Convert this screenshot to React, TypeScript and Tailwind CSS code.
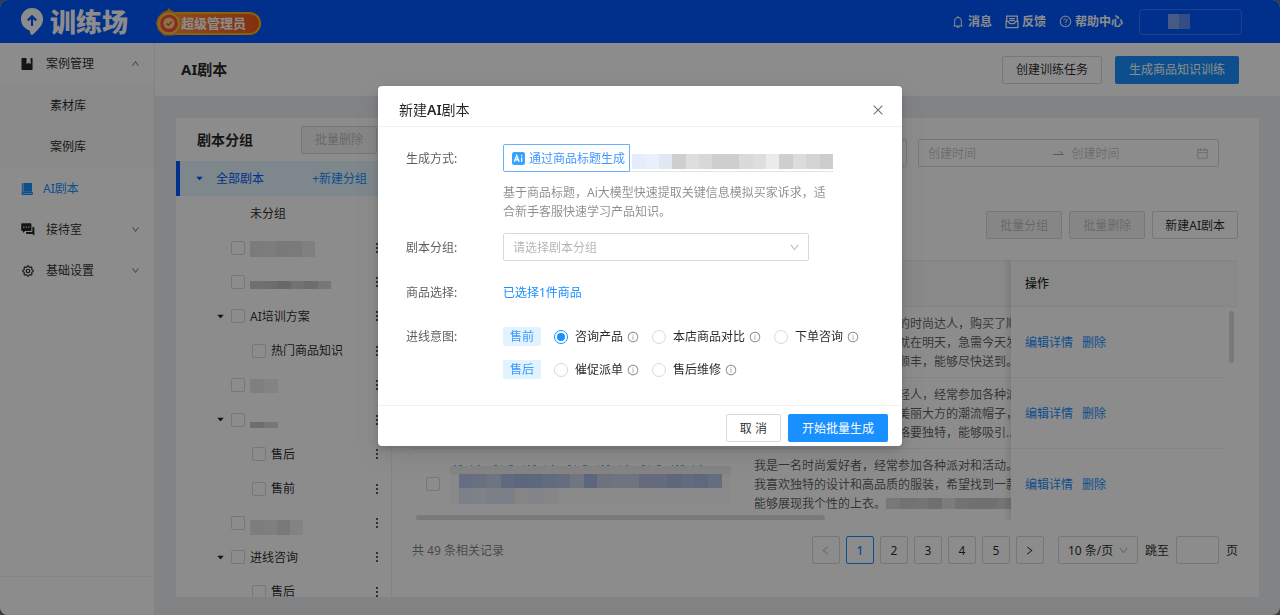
import React, { useState } from 'react';
import {
  AiFillCaretDown,
  AiOutlineBell,
  AiOutlineCalendar,
  AiOutlineClose,
  AiOutlineDown,
  AiOutlineInfoCircle,
  AiOutlineLeft,
  AiOutlineQuestionCircle,
  AiOutlineRight,
  AiOutlineUp
} from 'react-icons/ai';
import { TbSettings } from 'react-icons/tb';

interface TreeNode {
  id: string;
  label?: string;
  level: 0 | 1;
  open?: boolean;
  plain?: boolean;
  mask?: string;
  tiles?: string[];
}

const TREE: TreeNode[] = [
  { id: 'n0', label: '未分组', level: 0, plain: true },
  { id: 'n1', level: 0, mask: 'h-4 w-[65px] mt-[2px]', tiles: ['bg-[#e0e0e0]', 'bg-[#e4e4e4]', 'bg-[#dcdcdc]', 'bg-[#dedede]', 'bg-[#eaeaea]'] },
  { id: 'n2', level: 0, mask: 'h-2 w-[81px] mt-[6px]', tiles: ['bg-[#cdcdcd]', 'bg-[#c8c8c8]', 'bg-[#c0c0c0]', 'bg-[#cdd0d4]', 'bg-[#c9c6c0]', 'bg-[#d6dade]'] },
  { id: 'n3', label: 'AI培训方案', level: 0, open: true },
  { id: 'n4', label: '热门商品知识', level: 1 },
  { id: 'n5', level: 0, mask: 'h-[14px] w-7 mt-[2px]', tiles: ['bg-[#e8e8e8]', 'bg-[#eeeeee]'] },
  { id: 'n6', level: 0, open: true, mask: 'h-[6px] w-7 mt-[10px]', tiles: ['bg-[#c8c8c4]', 'bg-[#d6dad8]'] },
  { id: 'n7', label: '售后', level: 1 },
  { id: 'n8', label: '售前', level: 1 },
  { id: 'n9', level: 0, mask: 'h-[15px] w-[53px] mt-[10px]', tiles: ['bg-[#e4e4e4]', 'bg-[#e8e8e8]', 'bg-[#dcdcdc]', 'bg-[#eeeeee]'] },
  { id: 'n10', label: '进线咨询', level: 0, open: true },
  { id: 'n11', label: '售后', level: 1 }
];

const SCRIPTS = [
  {
    id: 's1',
    lines: [
      '我是一名二十五岁热爱潮流的时尚达人，购买了顺',
      '想穿去参加朋友聚会，聚会就在明天，急需今天发',
      '货，想问问是否可以选择发顺丰，能够尽快送到。'
    ]
  },
  {
    id: 's2',
    lines: [
      '我是一名喜欢潮流文化的年轻人，经常参加各种派',
      '对，想购买一顶既时尚又很美丽大方的潮流帽子，',
      '希望帽子质量非常好，且风格要独特，能够吸引...'
    ]
  },
  {
    id: 's3',
    lines: [
      '我是一名时尚爱好者，经常参加各种派对和活动。',
      '我喜欢独特的设计和高品质的服装，希望找到一款',
      '能够展现我个性的上衣。'
    ]
  }
];

const PRODUCT_TILES = [
  'bg-[#b9c8ee]', 'bg-[#c0ccea]', 'bg-[#c9d3ea]', 'bg-[#b0c0e6]', 'bg-[#a9bbe4]', 'bg-[#aabde8]', 'bg-[#b2c5e8]',
  'bg-[#b8c9e8]', 'bg-[#cdd6ea]', 'bg-[#a8bae6]', 'bg-[#c8d0e6]', 'bg-[#ccd4ea]', 'bg-[#ccd4ea]', 'bg-[#b8c4e4]',
  'bg-[#b6c4e6]', 'bg-[#aebce4]', 'bg-[#b4c2e4]', 'bg-[#aebee8]', 'bg-[#b8c6ea]'
];

const METHOD_TILES = [
  'bg-[#e4ecfd]', 'bg-[#e8f0fc]', 'bg-[#dfe7f0]', 'bg-[#cfcfcf]', 'bg-[#dedede]', 'bg-[#d8d8d8]', 'bg-[#cecece]',
  'bg-[#cecece]', 'bg-[#dadada]', 'bg-[#dedede]', 'bg-[#ebebeb]', 'bg-[#cecece]', 'bg-[#dcdcdc]', 'bg-[#d4d4d4]', 'bg-[#cdcdcd]'
];

const INTENTS = [
  { tag: '售前', options: ['咨询产品', '本店商品对比', '下单咨询'] },
  { tag: '售后', options: ['催促派单', '售后维修'] }
];

const BookmarkIcon = () => (
  <svg viewBox="0 0 12 12" className="size-3" fill="currentColor">
    <path d="M1.4 0H5.5V6.2L7.6 4.7L9.6 6.2V0H10.8Q11.6 0 11.6 .8V11.2Q11.6 12 10.8 12H1.4Q.5 12 .5 11.2V.8Q.5 0 1.4 0Z" />
  </svg>
);

const BookIcon = () => (
  <svg viewBox="0 0 12 12" className="size-3" fill="currentColor">
    <path d="M1.800 0H11V8.800H2.400V0ZM.8 1Q.8 0 1.800 0V9.200Q1.200 9.400 .8 9.900Z" />
    <path d="M2.200 9H11.800V12H2.200Q.5 12 .5 10.500T2.200 9Z" />
    <path d="M2 10.500H11" stroke="#fff" strokeWidth=".7" opacity=".7" />
  </svg>
);

const ChatIcon = () => (
  <svg viewBox="0 0 14 13" className="h-[13px] w-[14px]" fill="currentColor">
    <path d="M1.200 .2H9.400Q10.400 .2 10.400 1.200V7Q10.400 8 9.400 8H4L2 10V8H1.200Q.2 8 .2 7V1.200Q.2 .2 1.200 .2Z" />
    <path d="M11.400 4H12.400Q13.400 4 13.400 5V12.800L11.400 11H6Q5 11 5 10V9H10.400Q11.400 9 11.400 8Z" />
    <g fill="#fff">
      <rect x="2.2" y="3.5" width="1.2" height="1.2" />
      <rect x="4.7" y="3.5" width="1.2" height="1.2" />
      <rect x="7.2" y="3.5" width="1.2" height="1.2" />
    </g>
  </svg>
);

const FeedbackIcon = () => (
  <svg viewBox="0 0 14 14" className="size-[14px]" fill="none" stroke="currentColor" strokeWidth="1.300">
    <path d="M1.700 6V1.200H12.300V6" />
    <path d="M4.200 3.600H9.800M4.200 5.700H9.800" />
    <path d="M1.100 6.300V12.700H12.900V6.300H11L9 8.600H5L3 6.300Z" />
  </svg>
);

const RangeArrow = () => (
  <svg viewBox="0 0 11 8" className="h-2 w-[11px]" fill="none" stroke="currentColor">
    <path d="M0 5.500H10.300L6.800 2" />
  </svg>
);

const PinLogo = () => (
  <svg viewBox="0 0 22 27" className="h-[27px] w-[22px]">
    <path d="M11 0A11 11 0 0 1 22 11C22 16.500 19.500 18.500 16.500 22L12 26.400Q10.600 27.400 9.600 26.200L8.600 22.400C3.400 20.800 0 16.800 0 11A11 11 0 0 1 11 0Z" fill="#fff" />
    <path d="M11 18V8.600M6.800 12.400L11 8.200L15.200 12.400" fill="none" stroke="#0057ff" strokeWidth="2.200" />
  </svg>
);

const Medal = () => (
  <svg viewBox="0 0 26 28" className="absolute -left-2 -top-[6px] h-7 w-[26px]">
    <path d="M7 4L11 2.500L13 0L15 2.500L19 4L24 9L26 15L24 22L18 27.500H8L2 22L0 15L2 9Z" fill="#f09a1c" />
    <circle cx="13" cy="15.500" r="11" fill="#ffbe48" />
    <circle cx="13" cy="15.500" r="8.800" fill="#f4503c" />
    <circle cx="13" cy="15.200" r="5.600" fill="#ffd080" />
    <path d="M10.400 15.200L12.400 17.200L15.900 13.400" fill="none" stroke="#e0502a" strokeWidth="1.300" />
  </svg>
);

const Dots = () => (
  <svg viewBox="0 0 2 10" className="h-[10px] w-[2px]" fill="#5a5a5a">
    <rect width="2" height="2" />
    <rect y="4" width="2" height="2" />
    <rect y="8" width="2" height="2" />
  </svg>
);

const Mosaic: React.FC<{ tiles: string[]; className: string }> = ({ tiles, className }) => (
  <span className={`flex ${className}`}>
    {tiles.map((tile, i) => (
      <span key={i} className={`flex-1 ${tile}`} />
    ))}
  </span>
);

const checkboxClass = 'size-[14px] shrink-0 appearance-none rounded-xs border border-[#d9d9d9] bg-white checked:bg-[#1890ff]';
const buttonClass = 'h-7 rounded-xs border border-[#d9d9d9] bg-white px-3 text-black/85';
const disabledClass = 'h-7 rounded-xs border border-[#d9d9d9] bg-[#f5f5f5] px-[13px] text-black/25';
const pageClass = 'flex size-7 items-center justify-center rounded-xs border border-[#d9d9d9] bg-white';

const TopBar = () => (
  <header className="flex h-[43px] shrink-0 items-center bg-[#0057ff] pl-[21px] pr-[38px] text-white">
    <PinLogo />
    <span className="ml-[7px] text-[26px] leading-8 font-black">训练场</span>
    <div className="relative ml-[34px] mt-[3px] flex h-[23px] items-center rounded-full border-2 border-[#ffb400] bg-linear-to-r from-[#ff9040] to-[#f0561c] pl-[17px] pr-[13px] text-[13px] font-bold">
      <Medal />
      超级管理员
    </div>
    <nav className="ml-auto flex items-center gap-[13px] font-bold">
      <a href="#messages" className="flex items-center gap-[3px]"><AiOutlineBell size={14} />消息</a>
      <a href="#feedback" className="flex items-center gap-[3px]"><FeedbackIcon />反馈</a>
      <a href="#help" className="flex items-center gap-[3px]"><AiOutlineQuestionCircle size={13} />帮助中心</a>
    </nav>
    <button aria-label="账号" className="ml-4 flex h-[26px] w-[103px] items-center rounded-sm border border-white/20 pl-7">
      <Mosaic className="h-[15px] w-[22px]" tiles={['bg-[#7fa6f5]', 'bg-[#5f8cf0]']} />
    </button>
  </header>
);

const SideMenu = () => (
  <aside className="flex w-[154px] shrink-0 flex-col bg-white text-black/85">
    <nav className="flex-1">
      <a href="#cases" className="flex h-[41px] items-center pl-[21px] pr-[14px]">
        <BookmarkIcon />
        <span className="ml-[13px] flex-1">案例管理</span>
        <AiOutlineUp size={9} className="text-black/60" />
      </a>
      <div className="bg-[#fafafa] py-px">
        <a href="#material" className="flex h-[41px] items-center pl-[50px]">素材库</a>
        <a href="#case-library" className="flex h-[41px] items-center pl-[50px]">案例库</a>
      </div>
      <a href="#scripts" className="flex h-[41px] items-center pl-[21px] text-[#1890ff]">
        <BookIcon />
        <span className="ml-[10px]">AI剧本</span>
      </a>
      <a href="#reception" className="flex h-[41px] items-center pl-[21px] pr-[14px]">
        <ChatIcon />
        <span className="ml-[11px] flex-1">接待室</span>
        <AiOutlineDown size={9} className="text-black/60" />
      </a>
      <a href="#settings" className="flex h-[41px] items-center pl-[21px] pr-[14px]">
        <TbSettings size={14} />
        <span className="ml-[11px] flex-1">基础设置</span>
        <AiOutlineDown size={9} className="text-black/60" />
      </a>
    </nav>
    <div className="h-[39px] border-t border-[#f0f0f0]" />
  </aside>
);

const GroupTree = () => (
  <section className="flex w-[216px] shrink-0 flex-col overflow-hidden border-r border-[#f0f0f0]">
    <div className="flex h-[43px] shrink-0 items-center justify-between pl-[21px] pr-[14px]">
      <h2 className="text-[14px] font-bold text-black/85">剧本分组</h2>
      <button disabled className={disabledClass}>批量删除</button>
    </div>
    <div className="flex h-[35px] shrink-0 items-center border-l-4 border-[#0057ff] bg-[#e6f7ff] pl-[15px] pr-6">
      <AiFillCaretDown size={9} className="text-[#0057ff]" />
      <span className="ml-3 flex-1 text-[#0057ff]">全部剧本</span>
      <button className="text-[#1890ff]">+新建分组</button>
    </div>
    <ul className="grid h-[413px] shrink-0 auto-rows-fr">
      {TREE.map((node) => (
        <li key={node.id} className={`flex items-center pr-[13px] ${node.level === 1 ? 'pl-[61px]' : 'pl-10'}`}>
          <span className="w-[15px] shrink-0">{node.open && <AiFillCaretDown size={9} className="text-black/85" />}</span>
          <label className="flex flex-1 items-center gap-[5px]">
            {node.plain ? <span className="w-[14px]" /> : <input type="checkbox" className={checkboxClass} />}
            {node.label}
            {node.tiles && node.mask && <Mosaic className={node.mask} tiles={node.tiles} />}
          </label>
          {!node.plain && <button aria-label="更多"><Dots /></button>}
        </li>
      ))}
    </ul>
  </section>
);

const ScriptTable = () => (
  <div className="relative mt-[21px] overflow-hidden">
    <table className="w-full table-fixed border-separate border-spacing-0 text-left">
      <colgroup>
        <col className="w-[38px]" />
        <col />
        <col className="w-[271px]" />
        <col className="w-[215px]" />
        <col className="w-3" />
      </colgroup>
      <thead>
        <tr className="h-[47px] bg-[#fafafa]">
          <th className="border-y border-[#f0f0f0]" />
          <th className="border-y border-[#f0f0f0]" />
          <th className="border-y border-[#f0f0f0]" />
          <th colSpan={2} className="border-y border-[#f0f0f0] pl-[14px] font-medium">操作</th>
        </tr>
      </thead>
      <tbody>
        {SCRIPTS.map((row, i) => {
          const last = i === SCRIPTS.length - 1;
          const line = last ? 'border-b border-transparent' : 'border-b border-[#f0f0f0]';
          return (
            <tr key={row.id}>
              <td className={`pl-[14px] ${line}`}>
                <input type="checkbox" aria-label="选择剧本" className={`block ${checkboxClass}`} />
              </td>
              <td className={line}>
                {last && (
                  <a href="#product" aria-label="商品" className="mr-[9px] block">
                    <svg viewBox="0 0 281 2" preserveAspectRatio="none" className="h-[2px] w-full">
                      <path d="M4 1.500H261" stroke="#1677d8" strokeOpacity=".6" strokeDasharray="2 3 3 9 1 6 2 14 3 4 1 7 4 11 1 3" />
                    </svg>
                    <span className="block bg-[#f9f9fa]">
                      <span className="block h-2 bg-[#f0f0f0]" />
                      <Mosaic className="mx-[9px] h-[14px]" tiles={PRODUCT_TILES} />
                      <Mosaic className="ml-[9px] h-4 w-[98px]" tiles={['bg-[#e4eaf8]', 'bg-[#e8edf8]', 'bg-[#dfe6f6]', 'bg-[#e2e8f8]', 'bg-[#f4f4f6]', 'bg-[#eff1f6]', 'bg-[#f4f5f8]']} />
                    </span>
                  </a>
                )}
              </td>
              <td className={`overflow-hidden pt-[7px] pb-[6px] pl-[14px] leading-[19px] whitespace-nowrap text-black/65 ${line}`}>
                {row.lines.map((text, n) => (
                  <div key={n} className="flex items-center">
                    {text}
                    {last && n === 2 && (
                      <Mosaic className="h-[11px] flex-1" tiles={['bg-[#dadada]', 'bg-[#d0d0d0]', 'bg-[#d4d4d4]', 'bg-[#cacaca]', 'bg-[#e2e2e2]', 'bg-[#d0d0d0]', 'bg-[#cdcdcd]', 'bg-[#cccccc]', 'bg-[#d4d4d4]']} />
                    )}
                  </div>
                ))}
              </td>
              <td className={`bg-white pl-[14px] text-[#1890ff] ${line}`}>
                <a href="#edit">编辑详情</a>
                <a href="#delete" className="ml-[9px]">删除</a>
              </td>
              <td />
            </tr>
          );
        })}
      </tbody>
    </table>
    {/* fixed column shadow */}
    <div className="pointer-events-none absolute inset-y-0 right-[227px] w-2 bg-linear-to-l from-black/10 to-transparent" />
    <div className="absolute top-[51px] right-1 h-[52px] w-[5px] rounded-full bg-[#dcdcdc]" />
    <div className="absolute bottom-0 left-1 h-[5px] w-[409px] rounded-full bg-[#dcdcdc]" />
  </div>
);

const Pagination = () => (
  <div className="mt-4 flex items-center justify-between">
    <span className="text-black/50">共 49 条相关记录</span>
    <div className="flex items-center gap-[7px]">
      <div className="flex gap-[6px]">
        <button disabled aria-label="上一页" className={`${pageClass} text-black/30`}><AiOutlineLeft size={11} /></button>
        <button className="flex size-7 items-center justify-center rounded-xs border border-[#1890ff] bg-white font-medium text-[#1890ff]">1</button>
        {[2, 3, 4, 5].map((page) => (
          <button key={page} className={pageClass}>{page}</button>
        ))}
        <button aria-label="下一页" className={pageClass}><AiOutlineRight size={11} /></button>
      </div>
      <div className="relative ml-[7px]">
        <select aria-label="每页条数" className="h-7 w-20 appearance-none rounded-xs border border-[#d9d9d9] bg-white pl-[9px]">
          <option>10 条/页</option>
        </select>
        <AiOutlineDown size={11} className="pointer-events-none absolute top-[9px] right-[9px] text-black/30" />
      </div>
      <label htmlFor="jump">跳至</label>
      <input id="jump" className="h-7 w-[43px] rounded-xs border border-[#d9d9d9] bg-white" />
      <span>页</span>
    </div>
  </div>
);

const ScriptPanel = () => (
  <section className="min-w-0 flex-1 pt-[21px] pr-[21px] pl-5">
    <div className="mr-[19px] flex gap-[11px]">
      <input aria-label="搜索" className="h-7 min-w-0 flex-1 rounded-xs border border-[#d9d9d9] bg-white" />
      <div className="flex h-7 w-[301px] items-center rounded-xs border border-[#d9d9d9] bg-white px-[9px] text-black/25">
        <input aria-label="开始时间" placeholder="创建时间" className="min-w-0 flex-1 placeholder:text-black/25" />
        <span className="text-black/35"><RangeArrow /></span>
        <input aria-label="结束时间" placeholder="创建时间" className="ml-2 min-w-0 flex-1 placeholder:text-black/25" />
        <AiOutlineCalendar size={13} />
      </div>
    </div>
    <div className="mt-11 flex justify-end gap-[7px]">
      <button disabled className={disabledClass}>批量分组</button>
      <button disabled className={disabledClass}>批量删除</button>
      <button className={buttonClass}>新建AI剧本</button>
    </div>
    <ScriptTable />
    <Pagination />
  </section>
);

const CreateDialog: React.FC<{ onClose: () => void }> = ({ onClose }) => {
  const [intent, setIntent] = useState('咨询产品');

  return (
    <div className="fixed inset-0 flex items-start justify-center bg-black/45 pt-[86px]">
      <div role="dialog" aria-labelledby="dialog-title" className="w-[524px] rounded-sm bg-white shadow-[0_9px_28px_8px_rgba(0,0,0,0.05),0_6px_16px_0_rgba(0,0,0,0.08),0_3px_6px_0_rgba(0,0,0,0.12)]">
        <div className="flex h-[41px] items-center justify-between border-b border-[#f0f0f0] px-[17px] pt-[7px] pl-[21px]">
          <h3 id="dialog-title" className="text-[14px] text-black/85">新建<span className="font-semibold">AI</span>剧本</h3>
          <button aria-label="关闭" onClick={onClose} className="text-black/55"><AiOutlineClose size={14} /></button>
        </div>

        <form className="px-7 pt-[17px] pb-[26px] text-black/65" onSubmit={(e) => e.preventDefault()}>
          <div className="flex">
            <span className="w-[97px] shrink-0 leading-[29px]">生成方式:</span>
            <div>
              <div className="flex">
                <button type="button" className="flex h-7 items-center gap-1 rounded-l-xs border border-[#69b1ff] px-2 pr-1 text-[#4096ff]">
                  <svg viewBox="0 0 12 12" className="size-[13px]">
                    <rect width="12" height="12" rx="2" fill="#36a3ff" />
                    <path d="M2.200 9L4.400 3.200L6.600 9M3 7.300H5.800M8.900 5V9M8.900 2.800V4" fill="none" stroke="#fff" strokeWidth="1.200" />
                  </svg>
                  通过商品标题生成
                </button>
                <div className="flex w-[203px] items-end border-b border-[#e4e4e4] pb-[2px] pl-[2px]">
                  <Mosaic className="h-[15px] flex-1" tiles={METHOD_TILES} />
                </div>
              </div>
              <p className="mt-[11px] w-[330px] leading-[19px] text-black/45">
                基于商品标题，Ai大模型快速提取关键信息模拟买家诉求，适合新手客服快速学习产品知识。
              </p>
            </div>
          </div>

          <div className="mt-3 flex items-center">
            <label htmlFor="group" className="w-[97px] shrink-0">剧本分组:</label>
            <div className="relative">
              <select id="group" className="h-7 w-[306px] appearance-none rounded-xs border border-[#d9d9d9] bg-white pl-[9px] text-black/30">
                <option>请选择剧本分组</option>
              </select>
              <AiOutlineDown size={11} className="pointer-events-none absolute top-[9px] right-[9px] text-black/30" />
            </div>
          </div>

          <div className="mt-[17px] flex h-7 items-center">
            <span className="w-[97px] shrink-0">商品选择:</span>
            <a href="#products" className="text-[#1890ff]">已选择1件商品</a>
          </div>

          <fieldset className="mt-[21px] flex">
            <legend className="float-left w-[97px] shrink-0 leading-[19px]">进线意图:</legend>
            <div className="flex flex-col gap-[14px]">
              {INTENTS.map((row) => (
                <div key={row.tag} className="flex items-center gap-[13px]">
                  <span className="h-[19px] w-[38px] rounded-xs bg-[#e0f3ff] text-center leading-[19px] text-[#4096ff]">{row.tag}</span>
                  {row.options.map((option) => (
                    <label key={option} className="flex items-center text-black/85">
                      <input
                        type="radio"
                        name="intent"
                        checked={intent === option}
                        onChange={() => setIntent(option)}
                        className="mr-[7px] size-[14px] appearance-none rounded-full border border-[#d9d9d9] bg-white checked:border-[3px] checked:border-white checked:bg-[#1890ff] checked:outline checked:-outline-offset-1 checked:outline-[#1890ff]"
                      />
                      {option}
                      <AiOutlineInfoCircle size={12} className="ml-1 text-black/45" />
                    </label>
                  ))}
                </div>
              ))}
            </div>
          </fieldset>
        </form>

        <div className="flex h-[41px] items-center justify-end gap-[7px] border-t border-[#f0f0f0] pt-2 pr-[14px] pb-1">
          <button onClick={onClose} className="h-7 rounded-xs border border-[#d9d9d9] bg-white px-[13px] text-black/85">取 消</button>
          <button className="h-7 rounded-xs bg-[#1890ff] px-[14px] text-white">开始批量生成</button>
        </div>
      </div>
    </div>
  );
};

const App: React.FC = () => {
  const [dialogOpen, setDialogOpen] = useState(true);

  return (
    <div className="bg-[#707070] font-['Noto_Sans','Noto_Sans_CJK_SC',sans-serif] text-[12px] leading-[19px] text-black/85">
      <div className="flex h-screen flex-col overflow-hidden rounded-lg bg-[#ebeef3]">
        <TopBar />
        <div className="flex min-h-0 flex-1">
          <SideMenu />
          <main className="flex min-w-0 flex-1 flex-col">
            <div className="flex h-[53px] shrink-0 items-center border-l border-[#eeeeee] bg-white pr-[41px] pl-[26px]">
              <h1 className="mr-auto text-[15px] font-bold">AI剧本</h1>
              <button className="h-7 rounded-xs border border-[#d9d9d9] bg-white px-[13px] text-black/85">创建训练任务</button>
              <button className="ml-[13px] h-7 rounded-xs bg-[#1890ff] px-[14px] text-white">生成商品知识训练</button>
            </div>
            <div className="mt-[22px] mr-[21px] mb-[18px] ml-[22px] flex min-h-0 flex-1 overflow-hidden bg-white">
              <GroupTree />
              <ScriptPanel />
            </div>
          </main>
        </div>
      </div>
      {dialogOpen && <CreateDialog onClose={() => setDialogOpen(false)} />}
    </div>
  );
};

export default App;
